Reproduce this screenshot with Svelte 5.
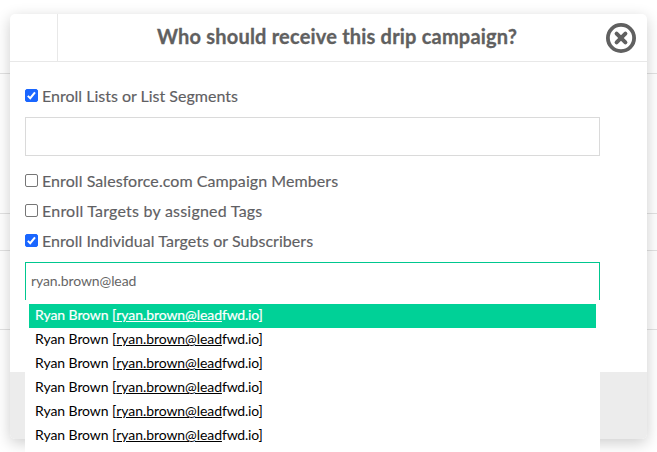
<script>
  let groups = $state([
    { id: 'lists', label: 'Enroll Lists or List Segments', checked: true, spacing: 0 },
    { id: 'salesforce', label: 'Enroll Salesforce.com Campaign Members', checked: false, spacing: 0.07 },
    { id: 'tags', label: 'Enroll Targets by assigned Tags', checked: false, spacing: 0.22 },
    { id: 'targets', label: 'Enroll Individual Targets or Subscribers', checked: true, spacing: 0.04 }
  ]);

  let query = $state('ryan.brown@lead');
  let highlighted = $state(0);

  const matches = Array.from({ length: 6 }, () => ({
    name: 'Ryan Brown',
    email: 'ryan.brown@leadfwd.io'
  }));
</script>

<div class="page">
  <div class="line first"></div>
  <div class="line second"></div>
  <div class="line third"></div>
  <div class="line fourth"></div>
</div>

<div class="modal">
  <header>
    <div class="corner"></div>
    <h2>Who should receive this drip campaign?</h2>
    <button class="close" aria-label="Close">
      <svg width="30" height="30" viewBox="0 0 30 30">
        <circle cx="15" cy="15" r="13.1" />
        <path d="M10.6 10.6L19.4 19.4M19.4 10.6L10.6 19.4" />
      </svg>
    </button>
  </header>

  <div class="body">
    {#each groups as group (group.id)}
      <label class={group.id}>
        <input type="checkbox" bind:checked={group.checked} />
        <svg class="box" class:checked={group.checked} width="13" height="13" viewBox="0 0 13 13">
          <rect x="0.5" y="0.5" width="12" height="12" rx="1.5" />
          {#if group.checked}
            <path d="M2.8 6.9L5.2 9.2L10 3.3" />
          {/if}
        </svg>
        <span style:letter-spacing="{group.spacing}px">{group.label}</span>
      </label>
      {#if group.id === 'lists'}
        <input class="field" type="text" aria-label="Lists" />
      {/if}
    {/each}

    <div class="picker">
      <input class="field active" type="text" aria-label="Targets" bind:value={query} />
      <ul>
        {#each matches as match, i}
          <li class:highlighted={i === highlighted} onmouseenter={() => (highlighted = i)}>
            <span class="name">{match.name} [</span><span class="match">{match.email.slice(0, 15)}</span><span class="rest">{match.email.slice(15)}]</span>
          </li>
        {/each}
      </ul>
    </div>
  </div>

  <footer></footer>
</div>

<style>
  :global(body) {
    background: #fff;
  }

  :global(#app) {
    display: flow-root;
    height: 100vh;
    overflow: hidden;
  }

  .page {
    position: absolute;
    inset: 0;
  }

  .line {
    box-sizing: border-box;
    border-bottom: 1px solid #e2e2e2;
  }

  .first { height: 74px; }
  .second { height: 140px; }
  .third { height: 37px; }
  .fourth { height: 79px; }

  .modal {
    position: relative;
    display: flex;
    flex-direction: column;
    width: 637px;
    height: 425px;
    margin: 14px 0 0 10px;
    border-radius: 5px;
    background: #fff;
    box-shadow: 0 4px 15px rgba(0, 0, 0, 0.2);
    font-family: Lato, "Liberation Sans", sans-serif;
    color: #5f6063;
  }

  header {
    box-sizing: border-box;
    display: flex;
    height: 48px;
    border-bottom: 1px solid #e8e8e8;
  }

  .corner {
    width: 47px;
    border-right: 1px solid #e8e8e8;
  }

  h2 {
    flex: 1;
    margin: 0;
    padding-left: 99px;
    font-size: 20px;
    font-weight: 700;
    line-height: 45px;
    letter-spacing: 0.2px;
    color: #606060;
    white-space: nowrap;
    -webkit-text-stroke: 0.3px #606060;
  }

  .close {
    width: 30px;
    height: 30px;
    margin: 9px 11px 0 0;
    padding: 0;
    border: 0;
    background: none;
  }

  .close svg {
    display: block;
    fill: none;
    stroke: #606060;
    stroke-width: 3.8;
  }

  .close path {
    stroke-width: 4;
    stroke-linecap: round;
  }

  .body {
    box-sizing: border-box;
    height: 310px;
    padding: 20px 15px 0;
  }

  label {
    display: flex;
    align-items: flex-start;
    gap: 4px;
    height: 30px;
    font-size: 16px;
    line-height: 28px;
    white-space: nowrap;
    -webkit-text-stroke: 0.15px #5f6063;
  }

  label.lists {
    height: 35px;
  }

  label input {
    position: absolute;
    opacity: 0;
  }

  .box {
    flex: none;
    margin-top: 7px;
    fill: #fff;
    stroke: #767676;
  }

  .box.checked rect {
    fill: #1a66ff;
    stroke: #1a66ff;
  }

  .box path {
    fill: none;
    stroke: #fff;
    stroke-width: 2;
  }

  .field {
    box-sizing: border-box;
    display: block;
    width: 575px;
    height: 39px;
    margin: 0 0 11px;
    padding: 0 5px 2px;
    border: 1px solid #dadada;
    background: #fff;
    font-family: inherit;
    font-size: 14px;
    letter-spacing: -0.1px;
    color: #666;
    outline: 0;
  }

  .field.active {
    margin: 0;
    border-color: #00c78f;
  }

  .picker {
    position: relative;
    width: 575px;
    margin-top: 5px;
  }

  ul {
    position: absolute;
    top: 38px;
    left: 0;
    box-sizing: border-box;
    width: 575px;
    height: 160px;
    margin: 0;
    padding: 4px;
    background: #fff;
    list-style: none;
    font-size: 14px;
    color: #000;
  }

  li {
    height: 24px;
    padding-left: 6px;
    line-height: 22px;
    white-space: nowrap;
  }

  li.highlighted {
    background: #00d197;
    color: #fff;
    -webkit-text-stroke: 0.2px #fff;
  }

  .name {
    letter-spacing: -0.08px;
  }

  .match {
    letter-spacing: -0.07px;
    text-decoration: underline;
  }

  .rest {
    letter-spacing: -0.2px;
  }

  footer {
    flex: 1;
    border-radius: 0 0 5px 5px;
    background: #ececec;
  }
</style>
